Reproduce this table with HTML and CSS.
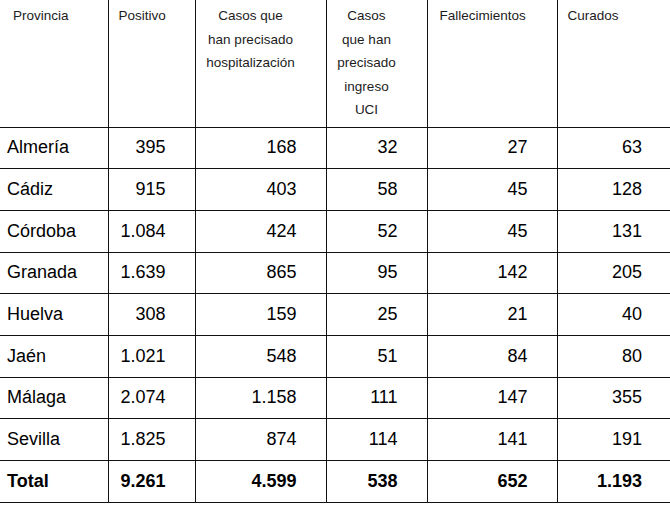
FILE: index.html
```html
<!DOCTYPE html>
<html lang="es">
<head>
<meta charset="utf-8">
<link rel="stylesheet" href="styles.css">
</head>
<body>
<table class="data">
  <colgroup>
    <col class="c1"><col class="c2"><col class="c3"><col class="c4"><col class="c5"><col class="c6">
  </colgroup>
  <thead>
    <tr class="head">
      <th class="h-left h-prov">Provincia</th>
      <th class="h-left">Positivo</th>
      <th class="h-center">Casos que<br>han precisado<br>hospitalización</th>
      <th class="h-center">Casos<br>que han<br>precisado<br>ingreso<br>UCI</th>
      <th class="h-left h-fall">Fallecimientos</th>
      <th class="h-left">Curados</th>
    </tr>
  </thead>
  <tbody>
    <tr><td class="name">Almería</td><td>395</td><td>168</td><td>32</td><td>27</td><td>63</td></tr>
    <tr><td class="name">Cádiz</td><td>915</td><td>403</td><td>58</td><td>45</td><td>128</td></tr>
    <tr><td class="name">Córdoba</td><td>1.084</td><td>424</td><td>52</td><td>45</td><td>131</td></tr>
    <tr><td class="name">Granada</td><td>1.639</td><td>865</td><td>95</td><td>142</td><td>205</td></tr>
    <tr><td class="name">Huelva</td><td>308</td><td>159</td><td>25</td><td>21</td><td>40</td></tr>
    <tr><td class="name">Jaén</td><td>1.021</td><td>548</td><td>51</td><td>84</td><td>80</td></tr>
    <tr><td class="name">Málaga</td><td>2.074</td><td>1.158</td><td>111</td><td>147</td><td>355</td></tr>
    <tr><td class="name">Sevilla</td><td>1.825</td><td>874</td><td>114</td><td>141</td><td>191</td></tr>
    <tr class="total"><td class="name">Total</td><td>9.261</td><td>4.599</td><td>538</td><td>652</td><td>1.193</td></tr>
  </tbody>
</table>
</body>
</html>
```

FILE: styles.css
```css
html, body {
  margin: 0;
  padding: 0;
  background: #ffffff;
}

body {
  font-family: "Liberation Sans", Arial, sans-serif;
  color: #000;
  overflow: hidden;
}

.data {
  border-collapse: collapse;
  table-layout: fixed;
  width: 671px;
}

.c1 { width: 108px; }
.c2 { width: 87px; }
.c3 { width: 131px; }
.c4 { width: 101px; }
.c5 { width: 130px; }
.c6 { width: 114px; }

.data th,
.data td {
  border-right: 1px solid #111;
  border-bottom: 1px solid #111;
  padding: 0;
}

.data th:last-child,
.data td:last-child {
  border-right: none;
}

.head {
  height: 127px;
}

.data th {
  font-weight: normal;
  font-size: 13.5px;
  line-height: 23.5px;
  color: #1c1c1c;
  vertical-align: top;
  padding-top: 4px;
}

.data th.h-left {
  text-align: left;
  padding-left: 10px;
}

.data th.h-prov {
  padding-left: 13px;
}

.data th.h-fall {
  padding-left: 12px;
}

.data th.h-center {
  text-align: center;
  padding-right: 20px;
}

.data td {
  height: 40.7px;
  font-size: 18px;
  text-align: right;
  padding-right: 29px;
  vertical-align: middle;
}

.data td.name {
  text-align: left;
  padding-left: 7px;
  padding-right: 0;
}

.total td {
  font-weight: bold;
}
```
